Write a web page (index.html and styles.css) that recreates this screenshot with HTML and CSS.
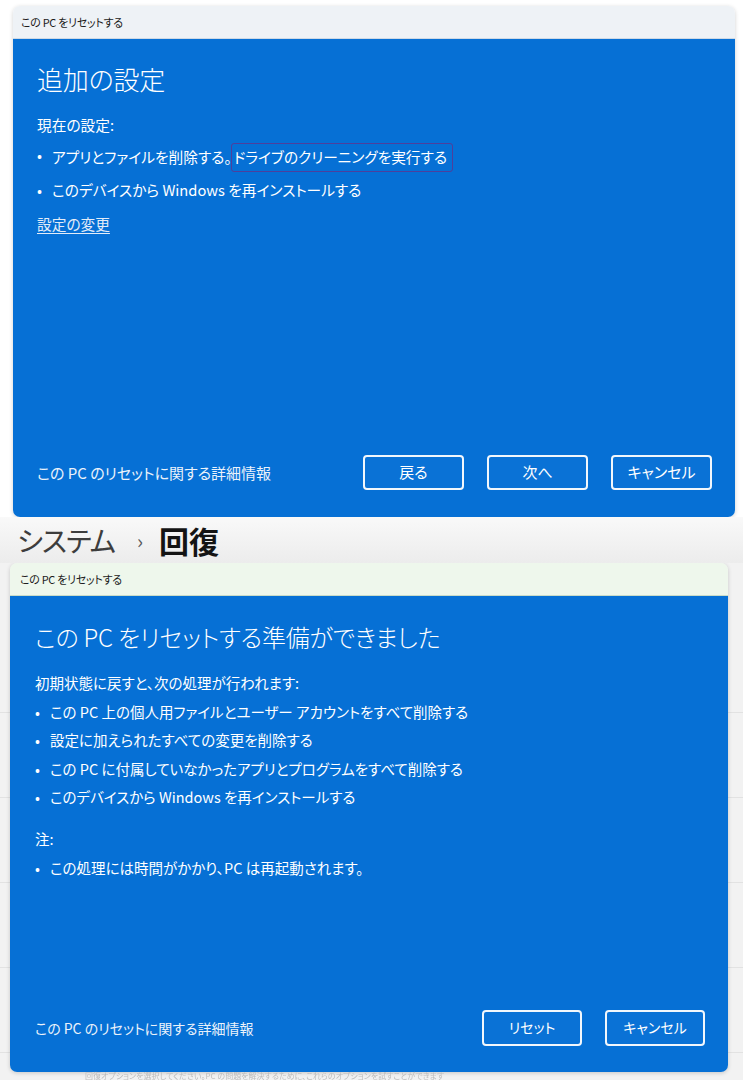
FILE: index.html
```html
<!DOCTYPE html>
<html lang="ja">
<head>
<meta charset="utf-8">
<title>この PC をリセットする</title>
<link rel="stylesheet" href="styles.css">
</head>
<body>
<div class="screen">

  <section class="dialog dialog--settings">
    <div class="titlebar">この PC をリセットする</div>
    <div class="panel">
      <h1 class="panel-heading">追加の設定</h1>
      <p class="lead">現在の設定:</p>
      <ul class="items items--loose">
        <li>アプリとファイルを削除する。<span class="mark">ドライブのクリーニングを実行する</span></li>
        <li>このデバイスから Windows を再インストールする</li>
      </ul>
      <a class="change-link" href="#">設定の変更</a>
      <div class="panel-footer">
        <span class="more-info">この PC のリセットに関する詳細情報</span>
        <div class="buttons">
          <button class="btn">戻る</button>
          <button class="btn">次へ</button>
          <button class="btn">キャンセル</button>
        </div>
      </div>
    </div>
  </section>

  <header class="page-title">
    <span class="crumb">システム</span>
    <span class="chevron">›</span>
    <span class="current">回復</span>
  </header>

  <div class="settings-page">
    <section class="dialog dialog--confirm">
      <div class="titlebar">この PC をリセットする</div>
      <div class="panel">
        <h1 class="panel-heading">この PC をリセットする準備ができました</h1>
        <p class="lead">初期状態に戻すと、次の処理が行われます:</p>
        <ul class="items">
          <li>この PC 上の個人用ファイルとユーザー アカウントをすべて削除する</li>
          <li>設定に加えられたすべての変更を削除する</li>
          <li>この PC に付属していなかったアプリとプログラムをすべて削除する</li>
          <li>このデバイスから Windows を再インストールする</li>
        </ul>
        <p class="lead lead--note">注:</p>
        <ul class="items">
          <li>この処理には時間がかかり、PC は再起動されます。</li>
        </ul>
        <div class="panel-footer">
          <span class="more-info">この PC のリセットに関する詳細情報</span>
          <div class="buttons">
            <button class="btn">リセット</button>
            <button class="btn">キャンセル</button>
          </div>
        </div>
      </div>
    </section>
    <div class="page-under">回復オプションを選択してください。PC の問題を解決するために、これらのオプションを試すことができます</div>
  </div>

</div>
</body>
</html>
```

FILE: styles.css
```css
* {
  box-sizing: border-box;
}

html, body {
  margin: 0;
  padding: 0;
}

body {
  width: 743px;
  height: 1080px;
  overflow: hidden;
  background: #ffffff;
  font-family: "Noto Sans CJK JP", "Noto Sans", sans-serif;
  font-feature-settings: "palt";
  color: #ffffff;
}

.screen {
  display: flex;
  flex-direction: column;
  height: 1080px;
}

/* ---------- dialog shell ---------- */

.dialog {
  display: flex;
  flex-direction: column;
  border-radius: 7px;
  overflow: hidden;
  box-shadow: 0 1px 4px rgba(0, 0, 0, 0.18);
}

.titlebar {
  height: 33px;
  flex: none;
  display: flex;
  align-items: center;
  padding-left: 8px;
  font-size: 11px;
  letter-spacing: -0.3px;
  color: #1b1b1b;
  background: #eef2f6;
  border-bottom: 1px solid #cdd9e6;
}

.panel {
  flex: 1;
  display: flex;
  flex-direction: column;
  background: #0670d5;
  padding: 23px 23px 27px 24px;
}

.panel-heading {
  margin: 0;
  font-size: 26px;
  line-height: 34px;
  font-weight: 300;
  letter-spacing: -0.2px;
}

.lead {
  margin: 17px 0 0;
  font-size: 14.7px;
  line-height: 24px;
}

.items {
  list-style: none;
  margin: 0;
  padding: 0;
}

.items li {
  position: relative;
  padding-left: 15px;
  font-size: 14.7px;
  line-height: 24px;
}

.items li::before {
  content: "•";
  position: absolute;
  left: 0;
  top: 0;
}

.items--loose li {
  margin-top: 6px;
}

.items--loose li + li {
  margin-top: 6px;
}

.mark {
  display: inline-block;
  padding: 1px 5px 2px 2px;
  margin-left: -1px;
  border: 1.5px solid #4e3f9c;
  border-radius: 3px;
  line-height: 24px;
}

.change-link {
  align-self: flex-start;
  margin-top: 10px;
  font-size: 14.7px;
  line-height: 24px;
  color: #e3ecf8;
  text-decoration: underline;
  text-underline-offset: 3px;
  text-decoration-thickness: 1px;
}

.panel-footer {
  margin-top: auto;
  display: flex;
  align-items: center;
  justify-content: space-between;
}

.more-info {
  font-size: 15px;
  color: #eaf2fb;
}

.buttons {
  display: flex;
  gap: 23px;
}

.btn {
  width: 101px;
  height: 35px;
  border: 2px solid #f2f7fc;
  border-radius: 4px;
  background: #0a72d6;
  color: #ffffff;
  font-family: inherit;
  font-feature-settings: "palt";
  font-size: 15px;
  padding: 0 0 2px;
}

/* ---------- first dialog ---------- */

.dialog--settings {
  margin: 6px 8px 0 13px;
  height: 511px;
  flex: none;
}

/* ---------- settings page behind ---------- */

.page-title {
  flex: none;
  height: 46px;
  display: flex;
  align-items: center;
  padding-left: 17px;
  background: linear-gradient(#f9f9f9, #ececec);
  color: #1a1a1a;
}

.crumb {
  font-size: 28px;
  color: #3d3d3d;
  letter-spacing: -1px;
}

.chevron {
  font-size: 20px;
  color: #5a5a5a;
  margin: 0 16px 0 22px;
}

.current {
  font-size: 30px;
  font-weight: 700;
  color: #141414;
}

.settings-page {
  flex: 1;
  display: flex;
  flex-direction: column;
  background:
    repeating-linear-gradient(#f2f2f2 0 84px, #e2e2e2 84px 85px) 0 65px / 100% 100% no-repeat,
    #f2f2f2;
  overflow: hidden;
}

.dialog--confirm {
  margin-left: 10px;
  width: 718px;
  height: 509px;
  flex: none;
}

.dialog--confirm .titlebar {
  background: #eef7ec;
  padding-left: 10px;
  border-bottom-color: #c9dcc8;
}

.dialog--confirm .panel {
  padding: 24px 23px 26px 25px;
}

.dialog--confirm .panel-heading {
  font-size: 24px;
}

.dialog--confirm .lead {
  margin-top: 18px;
  font-size: 14.5px;
  line-height: 22px;
}

.dialog--confirm .items li {
  font-size: 14.5px;
  line-height: 22px;
  margin-top: 6.5px;
}

.dialog--confirm .lead--note {
  margin-top: 20px;
}

.dialog--confirm .more-info {
  font-size: 14px;
}

.dialog--confirm .btn {
  width: 100px;
  height: 36px;
  font-size: 14px;
}

.page-under {
  padding: 0 0 0 85px;
  font-size: 8px;
  line-height: 8px;
  color: #bdbdbd;
  white-space: nowrap;
  filter: blur(0.5px);
}
```
